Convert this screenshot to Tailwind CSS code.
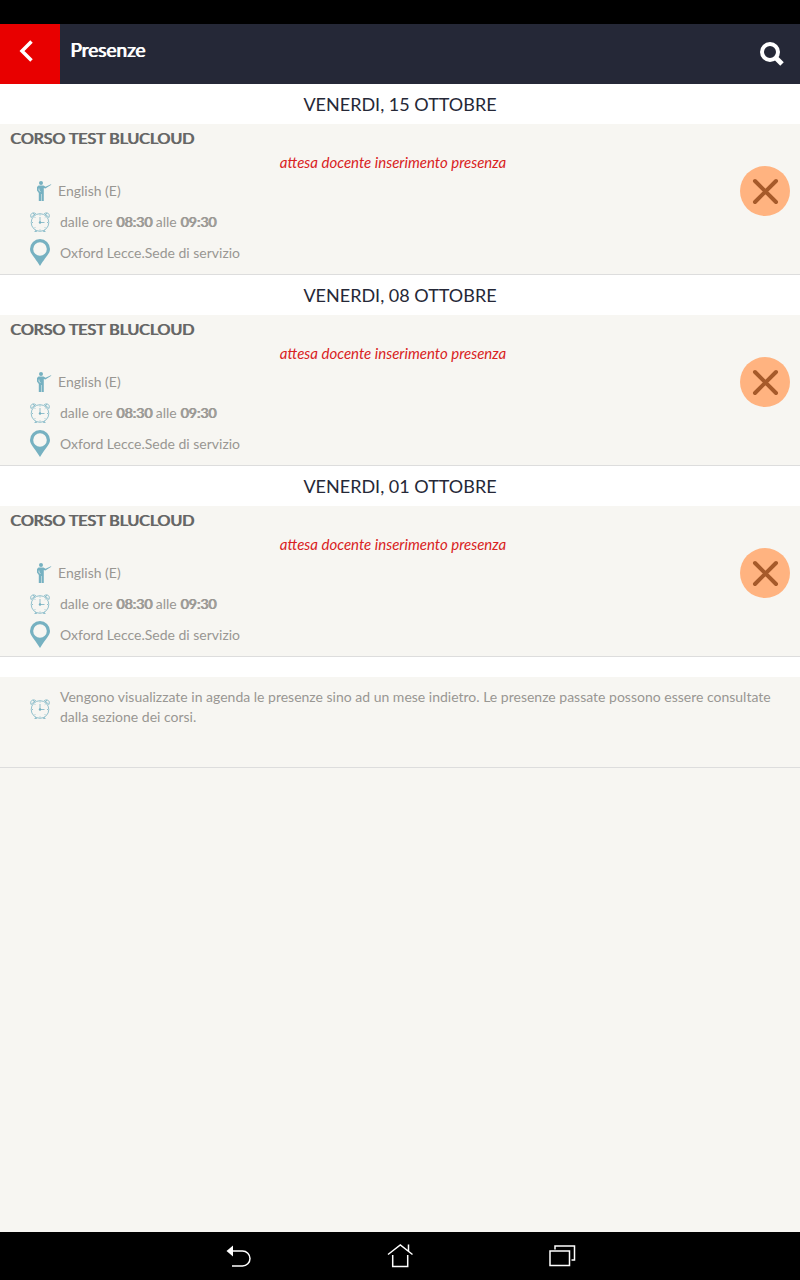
<!DOCTYPE html>
<html lang="it">
    <head>
        <meta charset="utf-8">
        <meta name="viewport" content="width=device-width, initial-scale=1">
        <script src="https://cdn.jsdelivr.net/npm/@tailwindcss/browser@4"></script>
        <title>Presenze</title>
    </head>
    <body class="flex flex-col min-h-screen bg-[#f7f6f2] font-['Lato',sans-serif] text-sm text-[#999793]">
        <!-- shared icons -->
        <svg class="hidden">
            <symbol id="teacher" viewBox="0 0 20 22">
                <g fill="#76b1c1">
                    <circle cx="8" cy="3" r="2"/>
                    <path d="M5.500 5.500h5l2 1.200 5.500-2.500.3.600-6 3.700-1.500-.4V21H8.700V14h-.5v7H5.800V13L4 10.500V7z"/>
                </g>
                <path d="M6 8.500v2l1.500 1" fill="none" stroke="#f7f6f2" stroke-width=".7"/>
            </symbol>
            <symbol id="clock" viewBox="0 0 20 20">
                <g fill="none" stroke="#76b1c1" stroke-width=".8">
                    <circle cx="10" cy="10.500" r="8.800"/>
                    <path d="M1 5.500C-.3 2 2.500-.2 5.600 1.500L1 5.500M3 1l1.300 1.700M19 5.500c1.300-3.500-1.500-5.700-4.600-4L19 5.500M17 1l-1.300 1.700M4.500 19.500h2l-1-1.500M15.500 19.500h-2l1-1.500"/>
                    <path d="M10 5v5.500h4.500M10 2.500v1M10 17.500v1M2 10.500h1M17 10.500h1M4.500 5l.7.700M15.500 5l-.7.700M4.500 16l.7-.7M15.500 16l-.7-.7"/>
                </g>
                <circle cx="10" cy="10.500" r="1.200" fill="#76b1c1"/>
            </symbol>
            <symbol id="pin" viewBox="0 0 20 27">
                <path fill="#76b1c1" fill-rule="evenodd" d="M10 0a10 10 0 0 1 10 10c0 4.500-3.500 6.500-10 17C3.500 16.500 0 14.500 0 10A10 10 0 0 1 10 0zm0 3.200a6.800 6.800 0 1 0 0 13.600 6.800 6.800 0 0 0 0-13.600z"/>
            </symbol>
            <symbol id="cross" viewBox="0 0 50 50">
                <circle cx="25" cy="25" r="25" fill="#ffb380"/>
                <path d="M15 15l21 21M36 15L15 36" stroke="#a65a2a" stroke-width="4" stroke-linecap="round"/>
            </symbol>
        </svg>

        <div class="h-6 bg-black"></div>
        <header class="flex h-[60px] bg-[#252837] text-white">
            <button type="button" aria-label="Indietro" class="flex w-[60px] items-center bg-[#e80000] pb-1.5 pl-[19px]">
                <svg class="h-[22px] w-4" viewBox="0 0 16 22" fill="none" stroke="currentColor" stroke-width="3.500"><path d="M12.500 1.500L3 11l9.500 9.500"/></svg>
            </button>
            <h1 class="flex-1 pt-3 pl-2.5 text-[19px] leading-7 [text-shadow:1px_0_0_currentColor]">Presenze</h1>
            <button type="button" aria-label="Cerca" class="flex items-center pr-4">
                <svg class="size-6" viewBox="0 0 24 24" fill="none" stroke="currentColor"><circle cx="10" cy="10" r="8" stroke-width="4"/><path d="M15 15l7 7" stroke-width="5"/></svg>
            </button>
        </header>

        <main class="flex-1">
            <section>
                <h2 class="bg-white text-center text-lg leading-10 text-[#252837]">VENERDI, 15 OTTOBRE</h2>
                <article class="relative border-b border-[#dddddd] pb-1.5">
                    <h3 class="pl-2.5 text-base leading-7 text-[#666666] [text-shadow:1px_0_0_currentColor]">CORSO TEST BLUCLOUD</h3>
                    <p class="pr-3.5 text-center text-[15px] leading-[21px] text-[#d92222] italic">attesa docente inserimento presenza</p>
                    <ul class="pt-0.5 pl-[30px] leading-[31px]">
                        <li class="flex items-center"><svg class="ml-[3px] mr-[5px] h-[22px] w-5"><use href="#teacher"/></svg>English (E)</li>
                        <li class="flex items-center"><svg class="mr-2.5 size-5"><use href="#clock"/></svg><span>dalle ore <span class="[text-shadow:1px_0_0_currentColor]">08:30</span> alle <span class="[text-shadow:1px_0_0_currentColor]">09:30</span></span></li>
                        <li class="flex items-center"><svg class="mr-2.5 h-[27px] w-5"><use href="#pin"/></svg>Oxford Lecce.Sede di servizio</li>
                    </ul>
                    <button type="button" aria-label="Assente" class="absolute top-[42px] right-2.5"><svg class="size-[50px]"><use href="#cross"/></svg></button>
                </article>
            </section>

            <section>
                <h2 class="bg-white text-center text-lg leading-10 text-[#252837]">VENERDI, 08 OTTOBRE</h2>
                <article class="relative border-b border-[#dddddd] pb-1.5">
                    <h3 class="pl-2.5 text-base leading-7 text-[#666666] [text-shadow:1px_0_0_currentColor]">CORSO TEST BLUCLOUD</h3>
                    <p class="pr-3.5 text-center text-[15px] leading-[21px] text-[#d92222] italic">attesa docente inserimento presenza</p>
                    <ul class="pt-0.5 pl-[30px] leading-[31px]">
                        <li class="flex items-center"><svg class="ml-[3px] mr-[5px] h-[22px] w-5"><use href="#teacher"/></svg>English (E)</li>
                        <li class="flex items-center"><svg class="mr-2.5 size-5"><use href="#clock"/></svg><span>dalle ore <span class="[text-shadow:1px_0_0_currentColor]">08:30</span> alle <span class="[text-shadow:1px_0_0_currentColor]">09:30</span></span></li>
                        <li class="flex items-center"><svg class="mr-2.5 h-[27px] w-5"><use href="#pin"/></svg>Oxford Lecce.Sede di servizio</li>
                    </ul>
                    <button type="button" aria-label="Assente" class="absolute top-[42px] right-2.5"><svg class="size-[50px]"><use href="#cross"/></svg></button>
                </article>
            </section>

            <section>
                <h2 class="bg-white text-center text-lg leading-10 text-[#252837]">VENERDI, 01 OTTOBRE</h2>
                <article class="relative border-b border-[#dddddd] pb-1.5">
                    <h3 class="pl-2.5 text-base leading-7 text-[#666666] [text-shadow:1px_0_0_currentColor]">CORSO TEST BLUCLOUD</h3>
                    <p class="pr-3.5 text-center text-[15px] leading-[21px] text-[#d92222] italic">attesa docente inserimento presenza</p>
                    <ul class="pt-0.5 pl-[30px] leading-[31px]">
                        <li class="flex items-center"><svg class="ml-[3px] mr-[5px] h-[22px] w-5"><use href="#teacher"/></svg>English (E)</li>
                        <li class="flex items-center"><svg class="mr-2.5 size-5"><use href="#clock"/></svg><span>dalle ore <span class="[text-shadow:1px_0_0_currentColor]">08:30</span> alle <span class="[text-shadow:1px_0_0_currentColor]">09:30</span></span></li>
                        <li class="flex items-center"><svg class="mr-2.5 h-[27px] w-5"><use href="#pin"/></svg>Oxford Lecce.Sede di servizio</li>
                    </ul>
                    <button type="button" aria-label="Assente" class="absolute top-[42px] right-2.5"><svg class="size-[50px]"><use href="#cross"/></svg></button>
                </article>
            </section>

            <div class="h-5 bg-white"></div>
            <div class="flex items-start border-b border-[#dddddd] pt-2.5 pr-5 pb-10 pl-[30px] leading-5">
                <svg class="mt-3 mr-2.5 size-5 shrink-0"><use href="#clock"/></svg>
                <p>Vengono visualizzate in agenda le presenze sino ad un mese indietro. Le presenze passate possono essere consultate dalla sezione dei corsi.</p>
            </div>
        </main>

        <nav class="flex h-12 items-center justify-center gap-[134px] bg-black pb-0.5 text-white">
            <button type="button" aria-label="Indietro">
                <svg class="size-7" viewBox="0 0 28 28" fill="none" stroke="currentColor" stroke-width="1.500"><path d="M7 10h11.500a7.200 7.200 0 0 1 0 15H8"/><path d="M2.500 10L9 4.500v11z" fill="currentColor" stroke="none"/></svg>
            </button>
            <button type="button" aria-label="Home">
                <svg class="size-7" viewBox="0 0 28 28" fill="none" stroke="currentColor" stroke-width="1.500"><path d="M2 13.500L14.300 4 26.500 13.500M22.500 10V3.500M6.700 14V25.500h15V14"/></svg>
            </button>
            <button type="button" aria-label="App recenti">
                <svg class="size-7" viewBox="0 0 28 28" fill="none" stroke="currentColor" stroke-width="1.500"><path d="M2 10h19.500v14.500H2zM7 8.500V5h19.500v14H23.500"/></svg>
            </button>
        </nav>
    </body>
</html>
